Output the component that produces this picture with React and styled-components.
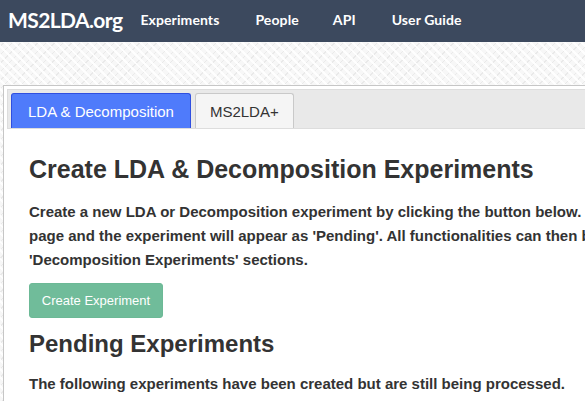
import React from "react";
import styled, { createGlobalStyle } from "styled-components";

const Global = createGlobalStyle`
  html, body { margin: 0; padding: 0; }
  body {
    overflow: hidden;
    font-family: "Liberation Sans", Arial, sans-serif;
    background-color: #f7f7f7;
    background-image:
      repeating-linear-gradient(45deg, rgba(255,255,255,0.9) 0 2px, transparent 2px 6px),
      repeating-linear-gradient(-45deg, rgba(230,230,230,0.8) 0 1px, transparent 1px 6px);
  }
`;

const Page = styled.div`
  width: 1100px;
  min-height: 401px;
`;

const NavBar = styled.nav`
  height: 42px;
  box-sizing: border-box;
  padding: 0 0 4px 8px;
  background: #3c495e;
  display: flex;
  align-items: center;
  font-family: Lato, "Open Sans", sans-serif;
  font-weight: 700;
  color: #fff;
`;

const Brand = styled.a`
  font-size: 21px;
  letter-spacing: -0.6px;
  margin-right: 18px;
  color: #fff;
`;

const NavLink = styled.a`
  font-size: 14px;
  letter-spacing: 0.1px;
  color: #fff;
  margin-left: ${(p) => p.$ml}px;
`;

const Main = styled.main`
  padding: 43px 0 0 3px;
`;

const Panel = styled.section`
  background: #fff;
  border-top: 1px solid #c6c6c6;
  border-left: 1px solid #c6c6c6;
  padding: 3px 0 0 3px;
  min-height: 400px;
`;

const TabNav = styled.ul`
  list-style: none;
  margin: 0;
  height: 35px;
  padding: 3px 3px 0 3px;
  display: flex;
  gap: 4px;
  align-items: flex-end;
  background: #e9e9e9;
  border: 1px solid #dddddd;
`;

const Tab = styled.li`
  height: 35px;
  box-sizing: border-box;
  padding: 0 ${(p) => (p.$active ? 16 : 14)}px;
  display: flex;
  align-items: center;
  font-size: 15px;
  border: 1px solid ${(p) => (p.$active ? "#2f4fe0" : "#c9c9c9")};
  border-bottom: none;
  border-radius: 3px 3px 0 0;
  background: ${(p) => (p.$active ? "#4f7bfb" : "#f5f5f5")};
  color: ${(p) => (p.$active ? "#fff" : "#333")};
`;

const Content = styled.div`
  padding: 0 22px;
  color: #333;
`;

const Heading = styled.h2`
  font-size: ${(p) => p.$size}px;
  font-weight: 700;
  line-height: 28px;
  margin: ${(p) => p.$mt}px 0 0 0;
  color: #333;
`;

const Para = styled.p`
  font-size: 15px;
  font-weight: 700;
  line-height: 24px;
  margin: ${(p) => p.$mt}px 0 0 0;
  color: #333;
`;

const Line = styled.span`
  display: block;
  white-space: nowrap;
`;

const Button = styled.button`
  display: block;
  width: 134px;
  height: 35px;
  margin-top: 11px;
  border: 1px solid #6cb996;
  border-radius: 3px;
  background: #70bc9a;
  color: #fff;
  font-family: "Liberation Sans", Arial, sans-serif;
  font-size: 13px;
  padding: 0;
`;

export default function App() {
  return (
    <Page>
      <Global />
      <NavBar>
        <Brand>MS2LDA.org</Brand>
        <NavLink $ml={0}>Experiments</NavLink>
        <NavLink $ml={36}>People</NavLink>
        <NavLink $ml={34}>API</NavLink>
        <NavLink $ml={36}>User Guide</NavLink>
      </NavBar>
      <Main>
        <Panel>
          <TabNav>
            <Tab $active>LDA &amp; Decomposition</Tab>
            <Tab>MS2LDA+</Tab>
          </TabNav>
          <Content>
            <Heading $size={25} $mt={26}>Create LDA &amp; Decomposition Experiments</Heading>
            <Para $mt={17}>
              <Line>
                Create a new LDA or Decomposition experiment by clicking the button below. Once submitted, you will be redirected to the home
              </Line>
              <Line>
                page and the experiment will appear as 'Pending'. All functionalities can then be accessed from the 'LDA Experiments' and
              </Line>
              <Line>'Decomposition Experiments' sections.</Line>
            </Para>
            <Button>Create Experiment</Button>
            <Heading $size={24} $mt={12}>Pending Experiments</Heading>
            <Para $mt={14}>
              <Line>The following experiments have been created but are still being processed.</Line>
            </Para>
          </Content>
        </Panel>
      </Main>
    </Page>
  );
}
